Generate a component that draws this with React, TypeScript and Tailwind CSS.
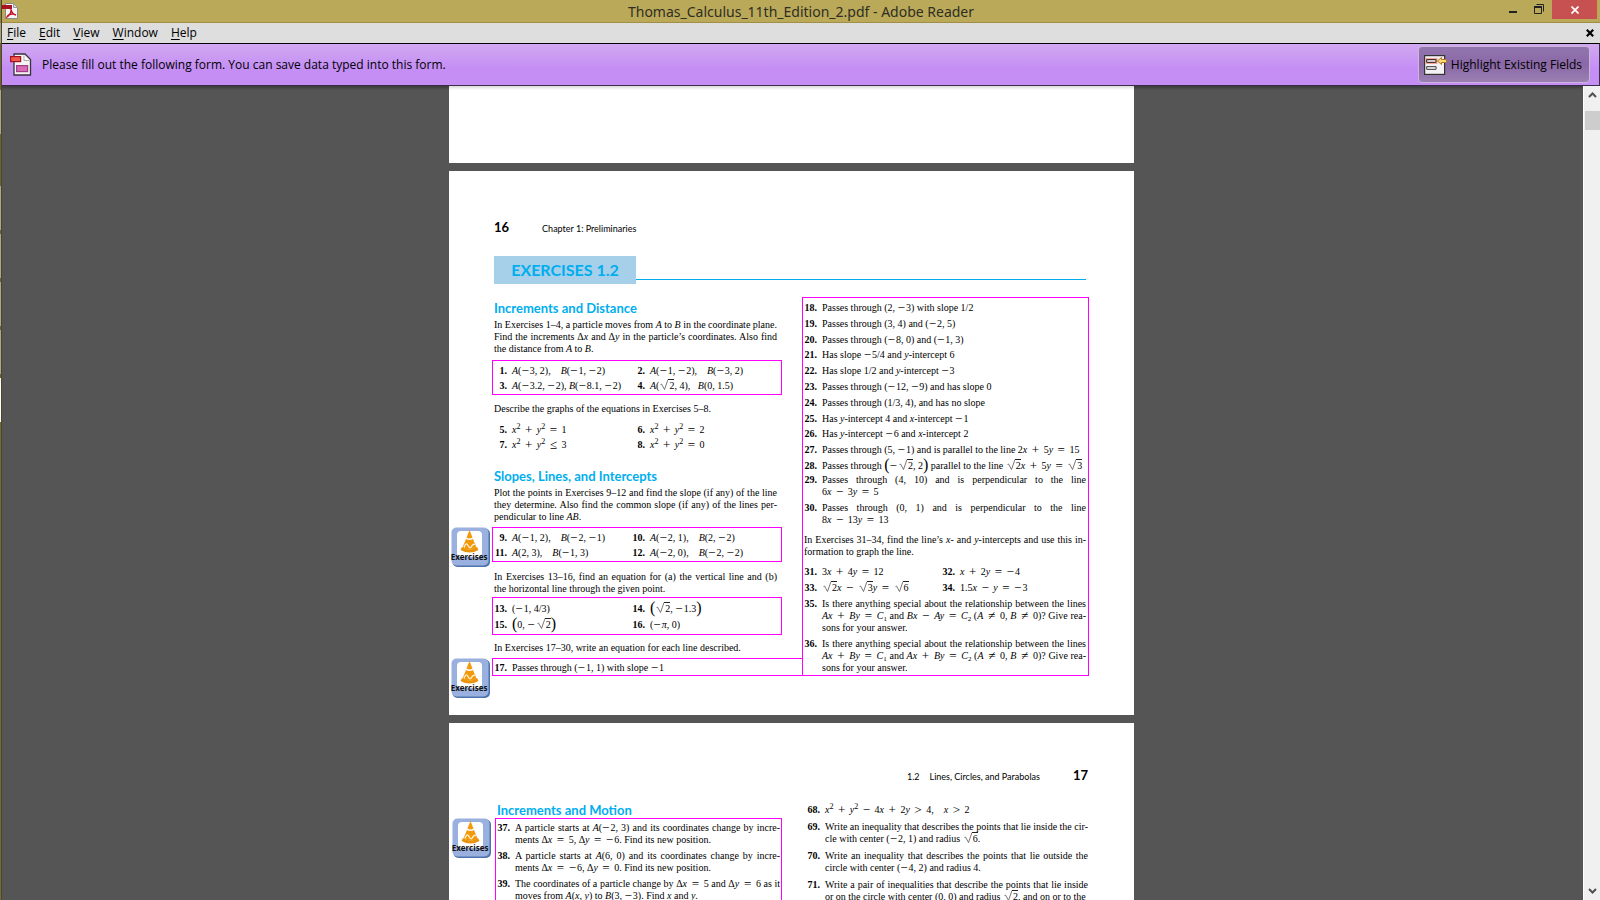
import type { ReactNode } from "react";

const TOKENS = /(\*[^*]+\*|\^\w|_\w|√\{[^}]+\}| [+=−≤>≠] |−|[[\]])/;

/* Small math markup: *italic*, ^superscript, _subscript, √{radicand}, [ ] tall parentheses. */
function Tex({ children }: { children: string }) {
  return (
    <>
      {children.split(TOKENS).map((t, i): ReactNode => {
        if (t.length > 2 && t.startsWith("*")) return <i key={i}>{t.slice(1, -1)}</i>;
        if (t.length === 2 && t[0] === "^") return <sup key={i} className="static align-[4px] text-[8px] leading-[0]">{t[1]}</sup>;
        if (t.length === 2 && t[0] === "_") return <sub key={i} className="static align-[-2px] text-[7px] leading-[0]">{t[1]}</sub>;
        if (t.startsWith("√{")) return <Root key={i}>{t.slice(2, -1)}</Root>;
        if (t === "−") return <span key={i} className="mr-px align-[-1px] text-[13px] leading-[0]">−</span>;
        if (/^ [+=−≤>≠] $/.test(t)) return <span key={i} className="mx-[2px]"> <span className="align-[-1px] text-[13px] leading-[0]">{t[1]}</span> </span>;
        if (t === "[") return <span key={i} className="align-[-1px] text-[16px] leading-[0]">(</span>;
        if (t === "]") return <span key={i} className="align-[-1px] text-[16px] leading-[0]">)</span>;
        return t;
      })}
    </>
  );
}

function Root({ children }: { children: string }) {
  return (
    <span className="ml-px whitespace-nowrap">
      <svg viewBox="0 0 8 11" className="-mt-[3px] inline h-[11px] w-2 align-[-1px]" fill="none" stroke="#555" strokeWidth="0.8" aria-hidden="true">
        <path d="M0.5 5.500 L1.500 5 L4.500 10.500 L8 0.500" />
      </svg>
      <span className="border-t border-[#222] pl-px">{children}</span>
    </span>
  );
}

function Lines({ lines }: { lines: string[] }) {
  return (
    <>
      {lines.map((l, i) => (
        <span key={i} className={i < lines.length - 1 ? "block whitespace-nowrap [text-align-last:justify]" : "block whitespace-nowrap"}>
          <Tex>{l}</Tex>
        </span>
      ))}
    </>
  );
}

function Item({ n, lines }: { n: number; lines: string[] }) {
  return (
    <div className="flex gap-[5px]">
      <b className="w-[13px] shrink-0 text-right">{n}.</b>
      <div className="min-w-0 flex-1">
        <Lines lines={lines} />
      </div>
    </div>
  );
}

function Pairs({ items, className }: { items: [number, string][]; className: string }) {
  return (
    <div className={`grid grid-cols-[138px_1fr] ${className}`}>
      {items.map(([n, t]) => (
        <Item key={n} n={n} lines={[t]} />
      ))}
    </div>
  );
}

function Heading({ children, className = "" }: { children: string; className?: string }) {
  return <h2 className={`font-[Lato,sans-serif] text-[13px] font-bold leading-4 text-[#00aeef] ${className}`}>{children}</h2>;
}

function ExercisesLink() {
  return (
    <a href="#exercises" className="absolute -left-[42px] -top-px flex h-[40px] w-[39px] flex-col items-center justify-end">
      <svg viewBox="0 0 39 40" className="absolute inset-0 h-full w-full" aria-hidden="true">
        <rect x="1.5" y="1.5" width="37.5" height="38.5" rx="5" fill="#4f74ad" />
        <rect x="0.5" y="0.5" width="37" height="38" rx="5" fill="#9ab0de" />
        <rect x="6" y="4" width="25" height="26" rx="4" fill="#fff" />
        <path d="M18.500 3 L21.500 10.500 Q18.500 12.500 15.500 10.500 Z" fill="#f29a0c" />
        <path d="M15 12 Q18.500 14 22 12 L25.500 20.500 Q18.500 25 11.500 20.500 Z" fill="#f29a0c" />
        <path d="M11 20 Q18.500 25 26 20 L27.500 23 Q18.500 28 9.500 23 Z" fill="#e9930a" />
        <path d="M13 20.500 Q15 14.500 17 18.500 T20.500 19.500 T24 17.500" fill="none" stroke="#fff2d6" strokeWidth="1.300" />
      </svg>
      <span className="relative mb-[5px] pr-[3px] font-['Open_Sans',sans-serif] text-[8px] font-bold leading-[10px] text-[#111]">Exercises</span>
    </a>
  );
}

function RestoreIcon() {
  return (
    <svg viewBox="0 0 10 10" className="h-[10px] w-[10px]" fill="none" stroke="#222" aria-hidden="true">
      <path d="M2.500 0.500 H9.500 V7.500" />
      <path d="M0 3 H8" strokeWidth="2" />
      <path d="M0.500 3 V9.500 H7.500 V3" />
    </svg>
  );
}

function PdfIcon() {
  return (
    <svg viewBox="0 0 16 16" className="h-4 w-4" aria-hidden="true">
      <path d="M3.500 0.500 H11.500 L15.500 4.500 V15.500 H3.500 Z" fill="#f7f7f7" stroke="#8a8a8a" />
      <path d="M11.500 0.500 V4.500 H15.500 Z" fill="#ddd" stroke="#999" />
      <rect x="0" y="2" width="10" height="4" fill="#a81424" />
      <path d="M9 6 C9.500 9.500 8 12 5 14 C6 11 11 10.500 14 12 C11 11.500 9.500 9 9 6 Z" fill="none" stroke="#c4162a" strokeWidth="1.400" />
    </svg>
  );
}

function FormIcon() {
  return (
    <svg viewBox="0 0 22 23" className="h-[23px] w-[22px]" aria-hidden="true">
      <path d="M4 1 H15 L20.500 6.500 V22 H4 Z" fill="#f4f4f4" stroke="#3a3040" strokeWidth="1.300" />
      <path d="M14 2.500 V7.500 H19" fill="#fff" stroke="#aaa" />
      <rect x="0.600" y="3.600" width="10" height="5" fill="#ee5a50" stroke="#a81020" strokeWidth="1.200" />
      <rect x="6.600" y="12.600" width="11" height="6" fill="#d66ab4" stroke="#a03c88" strokeWidth="1.200" />
    </svg>
  );
}

function FieldsIcon() {
  return (
    <svg viewBox="0 0 23 20" className="h-5 w-[23px]" aria-hidden="true">
      <rect x="0.600" y="0.600" width="20" height="18.800" fill="#f3f1f3" stroke="#333" strokeWidth="1.200" />
      <rect x="1.500" y="3" width="12" height="6" fill="#f3a79c" />
      <rect x="2.600" y="4.600" width="9.500" height="2.800" rx="0.800" fill="#fff" stroke="#4c3030" strokeWidth="1.200" />
      <rect x="2.600" y="11.600" width="9.500" height="2.800" rx="0.800" fill="#fff" stroke="#555" strokeWidth="1.200" />
      <path d="M13.500 6 L17.500 2.500 V4.500 H22.400 V7.500 H17.500 V9.500 Z" fill="#fbdc7a" stroke="#b8741c" />
    </svg>
  );
}

const MENUS = ["File", "Edit", "View", "Window", "Help"];

/* Desktop slivers showing left of the window: height and colour. */
const EDGE = [
  "h-[23px] bg-[#8f8146]",
  "h-[20px] bg-[#a5a286]",
  "h-[47px] bg-[#6e6238]",
  "h-[44px] bg-[#a9a98c]",
  "h-[52px] bg-[#6e6238]",
  "h-[44px] bg-[#a9a98c]",
  "h-[4px] bg-[#6e6238]",
  "h-[44px] bg-[#a9a98c]",
  "h-[4px] bg-[#6e6238]",
  "h-[44px] bg-[#a9a98c]",
  "h-[4px] bg-[#6e6238]",
  "h-[44px] bg-[#a9a98c]",
  "h-[4px] bg-[#6e6238]",
  "h-[44px] bg-white",
  "flex-1 bg-[#756a3e]",
];

const SINGLE: [number, string][] = [
  [18, "Passes through (2, −3) with slope 1/2"],
  [19, "Passes through (3, 4) and (−2, 5)"],
  [20, "Passes through (−8, 0) and (−1, 3)"],
  [21, "Has slope −5/4 and *y*-intercept 6"],
  [22, "Has slope 1/2 and *y*-intercept −3"],
  [23, "Passes through (−12, −9) and has slope 0"],
  [24, "Passes through (1/3, 4), and has no slope"],
  [25, "Has *y*-intercept 4 and *x*-intercept −1"],
  [26, "Has *y*-intercept −6 and *x*-intercept 2"],
  [27, "Passes through (5, −1) and is parallel to the line 2*x* + 5*y* = 15"],
  [28, "Passes through [−√{2}, 2] parallel to the line √{2}*x* + 5*y* = √{3}"],
];

const BOX = "relative -ml-[2px] -mr-[5px] border border-[#f0f] pl-px";

export default function App() {
  return (
    <div className="flex h-screen overflow-hidden bg-[#555] font-['Open_Sans',sans-serif] text-black">
      <div className="flex w-[2px] shrink-0 flex-col border-r border-[#4d4628]" aria-hidden="true">
        {EDGE.map((c, i) => (
          <div key={i} className={c} />
        ))}
      </div>
      <div className="flex min-w-0 flex-1 flex-col">
        <header className="grid h-[23px] shrink-0 grid-cols-[1fr_auto_1fr] border-b border-[#a18f48] bg-[#bba95a]">
          <div className="pt-[3px]">
            <PdfIcon />
          </div>
          <h1 className="font-['Noto_Sans',sans-serif] text-[14px] leading-[23px] text-[#2e2e22]">Thomas_Calculus_11th_Edition_2.pdf - Adobe Reader</h1>
          <div className="flex justify-end pr-[3px]">
            <button aria-label="Minimize" className="flex h-[19px] w-[27px] items-start justify-center pt-[11px]">
              <span className="h-[2px] w-2 bg-[#222]" />
            </button>
            <button aria-label="Restore" className="flex h-[19px] w-[26px] items-start justify-center pt-1">
              <RestoreIcon />
            </button>
            <button aria-label="Close" className="flex h-[19px] w-[45px] items-center justify-center bg-[#c75050]">
              <svg viewBox="0 0 8 8" className="h-2 w-2" stroke="#fff" strokeWidth="1.700" aria-hidden="true">
                <path d="M0.500 0.500 L7.500 7.500 M7.500 0.500 L0.500 7.500" />
              </svg>
            </button>
          </div>
        </header>
        <nav className="flex h-[21px] shrink-0 items-start border-b border-black bg-[#dedede] pl-[5px] pr-[6px] text-[12px] leading-[19px]">
          <div className="flex flex-1 gap-[13px]">
            {MENUS.map((m) => (
              <button key={m}>
                <span className="underline underline-offset-2">{m[0]}</span>
                {m.slice(1)}
              </button>
            ))}
          </div>
          <button aria-label="Close document" className="flex h-[19px] items-center">
            <svg viewBox="0 0 8 8" className="h-2 w-2" stroke="#000" strokeWidth="2.200" aria-hidden="true">
              <path d="M0.800 0.800 L7.200 7.200 M7.200 0.800 L0.800 7.200" />
            </svg>
          </button>
        </nav>
        <section className="flex h-[42px] shrink-0 items-center justify-between border-b border-r border-[#3a2c4a] bg-linear-to-b from-[#d1a9f0] to-[#c48ef5] to-60% pl-2 pr-[9px] text-[12px]">
          <div className="flex items-center gap-[10px]">
            <FormIcon />
            <p>Please fill out the following form. You can save data typed into this form.</p>
          </div>
          <button className="flex h-[37px] items-center gap-1 rounded-[4px] border border-[#cdb6dc] bg-linear-to-b from-[#9276ae] via-[#8a68a6] to-[#9a80b2] pl-[5px] pr-[7px]">
            <FieldsIcon />
            Highlight Existing Fields
          </button>
        </section>
        <div className="flex min-h-0 flex-1">
          <main className="min-w-0 flex-1 overflow-hidden bg-[#555] pr-[2px] font-['Liberation_Serif',serif] text-[10px] leading-[12px] text-black shadow-[inset_0_4px_3px_-2px_rgba(0,0,0,0.3)]">
            <div className="mx-auto flex w-[685px] flex-col gap-2">
              <div className="h-[77px] bg-white shadow-[inset_0_4px_3px_-2px_rgba(0,0,0,0.15)]" />

              <article className="bg-white pb-[39px] pl-[45px] pr-[48px] pt-12">
                <div className="flex items-baseline gap-[33px] font-[Lato,sans-serif] leading-4">
                  <b className="text-[13px]">16</b>
                  <span className="text-[9px] leading-none">Chapter 1: Preliminaries</span>
                </div>
                <div className="mt-[21px] flex items-end">
                  <h1 className="w-[142px] bg-[#a6cfea] text-center font-[Lato,sans-serif] text-[16px] font-bold leading-7 text-[#00aeef]">EXERCISES 1.2</h1>
                  <div className="mb-1 h-px flex-1 bg-[#00aeef]" />
                </div>
                <div className="mt-4 grid grid-cols-[283px_282px] gap-x-[27px]">
                  <div>
                    <Heading>Increments and Distance</Heading>
                    <p className="mt-[3px]">
                      <Lines lines={["In Exercises 1–4, a particle moves from *A* to *B* in the coordinate plane.", "Find the increments Δ*x* and Δ*y* in the particle’s coordinates. Also find", "the distance from *A* to *B*."]} />
                    </p>
                    <div className={`mt-[5px] pb-px pt-[2px] ${BOX}`}>
                      <Pairs className="leading-[15px]" items={[[1, "*A*(−3, 2),\u2003*B*(−1, −2)"], [2, "*A*(−1, −2),\u2003*B*(−3, 2)"], [3, "*A*(−3.2, −2), *B*(−8.1, −2)"], [4, "*A*(√{2}, 4),\u2002 *B*(0, 1.5)"]]} />
                    </div>
                    <p className="mt-2">Describe the graphs of the equations in Exercises 5–8.</p>
                    <Pairs className="mt-[7px] leading-[15px]" items={[[5, "*x*^2 + *y*^2 = 1"], [6, "*x*^2 + *y*^2 = 2"], [7, "*x*^2 + *y*^2 ≤ 3"], [8, "*x*^2 + *y*^2 = 0"]]} />
                    <Heading className="mt-4">Slopes, Lines, and Intercepts</Heading>
                    <p className="mt-[3px]">
                      <Lines lines={["Plot the points in Exercises 9–12 and find the slope (if any) of the line", "they determine. Also find the common slope (if any) of the lines per-", "pendicular to line *AB*."]} />
                    </p>
                    <div className={`mt-1 pb-px pt-[2px] ${BOX}`}>
                      <ExercisesLink />
                      <Pairs className="leading-[15px]" items={[[9, "*A*(−1, 2),\u2003*B*(−2, −1)"], [10, "*A*(−2, 1),\u2003*B*(2, −2)"], [11, "*A*(2, 3),\u2003*B*(−1, 3)"], [12, "*A*(−2, 0),\u2003*B*(−2, −2)"]]} />
                    </div>
                    <p className="mt-[9px]">
                      <Lines lines={["In Exercises 13–16, find an equation for (a) the vertical line and (b)", "the horizontal line through the given point."]} />
                    </p>
                    <div className={`mt-[2px] pb-px pt-[3px] ${BOX}`}>
                      <Pairs className="leading-4" items={[[13, "(−1, 4/3)"], [14, "[√{2}, −1.3]"], [15, "[0, −√{2}]"], [16, "(−*π*, 0)"]]} />
                    </div>
                    <p className="mt-[7px]">In Exercises 17–30, write an equation for each line described.</p>
                    <div className="relative -ml-[2px] -mr-[26px] mt-1 border border-[#f0f] pl-px pt-px leading-[15px]">
                      <ExercisesLink />
                      <Item n={17} lines={["Passes through (−1, 1) with slope −1"]} />
                    </div>
                  </div>

                  <div className="-ml-[2px] -mr-[3px] -mt-[3px] border border-[#f0f] pb-px pl-px pr-[2px] pt-[2px]">
                    <div className="flex min-h-[173px] flex-col justify-between leading-[15px]">
                      {SINGLE.map(([n, t]) => (
                        <Item key={n} n={n} lines={[t]} />
                      ))}
                    </div>
                    <div className="mt-px flex flex-col gap-1">
                      <Item n={29} lines={["Passes through (4, 10) and is perpendicular to the line", "6*x* − 3*y* = 5"]} />
                      <Item n={30} lines={["Passes through (0, 1) and is perpendicular to the line", "8*x* − 13*y* = 13"]} />
                    </div>
                    <p className="mt-2">
                      <Lines lines={["In Exercises 31–34, find the line’s *x*- and *y*-intercepts and use this in-", "formation to graph the line."]} />
                    </p>
                    <Pairs className="mt-[6px] leading-4" items={[[31, "3*x* + 4*y* = 12"], [32, "*x* + 2*y* = −4"], [33, "√{2}*x* − √{3}*y* = √{6}"], [34, "1.5*x* − *y* = −3"]]} />
                    <div className="mt-[2px] flex flex-col gap-1">
                      <Item n={35} lines={["Is there anything special about the relationship between the lines", "*Ax* + *By* = *C*_1 and *Bx* − *Ay* = *C*_2 (*A* ≠ 0, *B* ≠ 0)? Give rea-", "sons for your answer."]} />
                      <Item n={36} lines={["Is there anything special about the relationship between the lines", "*Ax* + *By* = *C*_1 and *Ax* + *By* = *C*_2 (*A* ≠ 0, *B* ≠ 0)? Give rea-", "sons for your answer."]} />
                    </div>
                  </div>
                </div>
              </article>

              <article className="bg-white pl-12 pr-[46px] pt-11">
                <div className="flex items-baseline justify-end font-[Lato,sans-serif] leading-4">
                  <span className="text-[9px] leading-none">1.2</span>
                  <span className="ml-[10px] text-[9px] leading-none">Lines, Circles, and Parabolas</span>
                  <b className="ml-[33px] text-[13px]">17</b>
                </div>
                <div className="mt-[19px] grid grid-cols-[283px_281px] gap-x-[27px]">
                  <div>
                    <Heading>Increments and Motion</Heading>
                    <div className="relative -ml-[2px] -mr-[2px] flex flex-col gap-1 border border-[#f0f] px-px pt-[3px]">
                      <div className="absolute -left-[2px] top-0">
                        <ExercisesLink />
                      </div>
                      <Item n={37} lines={["A particle starts at *A*(−2, 3) and its coordinates change by incre-", "ments Δ*x* = 5, Δ*y* = −6. Find its new position."]} />
                      <Item n={38} lines={["A particle starts at *A*(6, 0) and its coordinates change by incre-", "ments Δ*x* = −6, Δ*y* = 0. Find its new position."]} />
                      <Item n={39} lines={["The coordinates of a particle change by Δ*x* = 5 and Δ*y* = 6 as it", "moves from *A*(*x*, *y*) to *B*(3, −3). Find *x* and *y*."]} />
                    </div>
                  </div>
                  <div className="flex flex-col gap-[5px] pt-[2px]">
                    <Item n={68} lines={["*x*^2 + *y*^2 − 4*x* + 2*y* > 4,\u2003*x* > 2"]} />
                    <Item n={69} lines={["Write an inequality that describes the points that lie inside the cir-", "cle with center (−2, 1) and radius √{6}."]} />
                    <Item n={70} lines={["Write an inequality that describes the points that lie outside the", "circle with center (−4, 2) and radius 4."]} />
                    <Item n={71} lines={["Write a pair of inequalities that describe the points that lie inside", "or on the circle with center (0, 0) and radius √{2}, and on or to the"]} />
                  </div>
                </div>
              </article>
            </div>
          </main>
          <div className="flex w-[17px] shrink-0 flex-col items-center border-l border-white bg-[#f0f0f0]">
            <button aria-label="Scroll up" className="flex h-[25px] w-full items-start justify-center pt-[6px]">
              <Chevron d="M1 5 L4.500 1.500 L8 5" />
            </button>
            <div className="h-[19px] w-[15px] bg-[#cdcdcd]" />
            <div className="flex-1" />
            <button aria-label="Scroll down" className="flex h-[19px] w-full items-center justify-center">
              <Chevron d="M1 1 L4.500 4.500 L8 1" />
            </button>
          </div>
        </div>
      </div>
    </div>
  );
}

function Chevron({ d }: { d: string }) {
  return (
    <svg viewBox="0 0 9 6" className="h-[6px] w-[9px]" fill="none" stroke="#505050" strokeWidth="2" aria-hidden="true">
      <path d={d} />
    </svg>
  );
}
